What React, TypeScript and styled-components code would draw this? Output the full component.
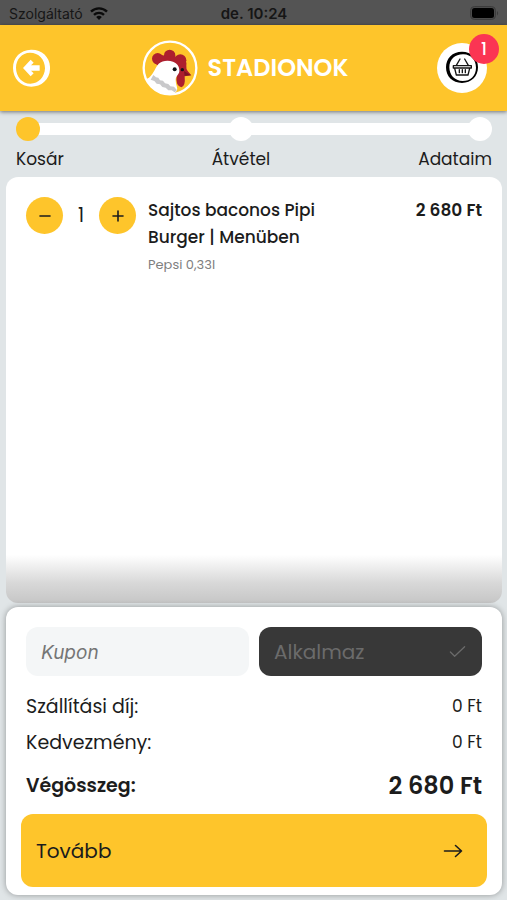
import React, { useState } from "react";
import styled, { createGlobalStyle, css } from "styled-components";

const color = {
  yellow: "#fec52b",
  page: "#e0e5e7",
  ink: "#1c1c1c",
  dark: "#383838",
  red: "#fb3553",
};

const GlobalStyle = createGlobalStyle`
  *, *::before, *::after { box-sizing: border-box; }
  body {
    margin: 0;
    background: ${color.page};
    color: ${color.ink};
    font-family: Poppins, Inter, sans-serif;
  }
  button, input { font-family: inherit; color: inherit; }
`;

const Screen = styled.div`
  display: flex;
  flex-direction: column;
  min-height: 100vh;
`;

const StatusBar = styled.div`
  display: grid;
  grid-template-columns: 1fr auto 1fr;
  align-items: center;
  height: 25px;
  padding: 2px 8px 0 9px;
  background: #545454;
  color: #161616;
  font-family: Inter, sans-serif;
  font-size: 14px;
  line-height: 20px;
`;

const Carrier = styled.div`
  display: flex;
  align-items: center;
  gap: 7px;
`;

const Clock = styled.time`
  font-weight: 600;
  font-size: 15px;
`;

const BatterySlot = styled.div`
  display: flex;
  justify-content: flex-end;
`;

const Header = styled.header`
  position: relative;
  display: grid;
  grid-template-columns: 1fr auto 1fr;
  align-items: center;
  height: 86px;
  padding: 0 20px 0 12px;
  background: ${color.yellow};
  box-shadow: 0 1px 4px rgba(0, 0, 0, 0.5);
`;

const IconButton = styled.button`
  display: grid;
  place-items: center;
  width: 38px;
  height: 38px;
  padding: 0;
  border: 0;
  border-radius: 50%;
  background: none;
  cursor: pointer;
`;

const Brand = styled.div`
  display: flex;
  align-items: center;
  gap: 10px;
  padding-right: 9px;
`;

const BrandName = styled.h1`
  margin: 0;
  color: #fff;
  font-size: 24px;
  font-weight: 600;
  line-height: 32px;
`;

const BasketButton = styled(IconButton)`
  position: relative;
  justify-self: end;
  width: 50px;
  height: 50px;
  background: #fff;
`;

const Badge = styled.span`
  position: absolute;
  top: -9px;
  right: -12px;
  width: 30px;
  height: 30px;
  border-radius: 50%;
  background: ${color.red};
  color: #fff;
  font-size: 17px;
  font-weight: 500;
  line-height: 30px;
  text-align: center;
`;

const Steps = styled.ol`
  position: relative;
  display: flex;
  justify-content: space-between;
  margin: 0;
  padding: 6px 15px 5px 16px;
  list-style: none;

  &::before {
    content: "";
    position: absolute;
    top: 12px;
    left: 28px;
    right: 28px;
    height: 12px;
    background: #fff;
  }
`;

const Step = styled.li<{ $align: "start" | "center" | "end" }>`
  position: relative;
  display: flex;
  flex-direction: column;
  align-items: ${(p) => (p.$align === "center" ? "center" : `flex-${p.$align}`)};
  gap: 5px;
  font-size: 17px;
  line-height: 26px;
`;

const StepDot = styled.span<{ $active: boolean }>`
  width: 24px;
  height: 24px;
  border-radius: 50%;
  background: ${(p) => (p.$active ? color.yellow : "#fff")};
`;

const panel = css`
  margin: 0 5px 0 6px;
  border-radius: 12px;
  background-color: #fff;
`;

const CartPanel = styled.main`
  ${panel}
  flex: 1;
  padding: 20px;
  background-image: linear-gradient(to top, #c6c6c6, #d8d8d8 20px, #fff 48px);
`;

const CartItem = styled.article`
  display: flex;
  align-items: flex-start;
  gap: 12px;
`;

const Quantity = styled.div`
  display: flex;
  align-items: center;
  flex: none;
`;

const RoundButton = styled.button`
  display: grid;
  place-items: center;
  width: 37px;
  height: 37px;
  padding: 0;
  border: 0;
  border-radius: 50%;
  background: ${color.yellow};
  cursor: pointer;
`;

const Count = styled.output`
  width: 36px;
  font-size: 19px;
  line-height: 37px;
  text-align: center;
`;

const ItemText = styled.div`
  flex: 1;
  max-width: 210px;
`;

const ItemName = styled.h2`
  margin: 0;
  font-size: 17px;
  font-weight: 500;
  line-height: 27px;
`;

const ItemNote = styled.p`
  margin: 0;
  color: #808080;
  font-size: 13px;
  line-height: 27px;
`;

const ItemPrice = styled.strong`
  margin-left: auto;
  font-size: 17px;
  font-weight: 600;
  line-height: 27px;
  white-space: nowrap;
`;

const SummaryPanel = styled.section`
  ${panel}
  margin-top: 4px;
  margin-bottom: 5px;
  padding: 20px 15px 8px;
  box-shadow: 0 0 6px rgba(0, 0, 0, 0.35);
`;

const CouponForm = styled.form`
  display: grid;
  grid-template-columns: 1fr 1fr;
  gap: 10px;
  padding: 0 5px;
  margin-bottom: 12px;
`;

const CouponInput = styled.input`
  min-width: 0;
  height: 49px;
  padding: 2px 15px 0;
  border: 0;
  border-radius: 12px;
  background: #f4f6f7;
  font-family: Inter, sans-serif;
  font-size: 19px;
  font-style: italic;

  &::placeholder {
    color: #757575;
    opacity: 1;
  }
`;

const WideButton = styled.button<{ $tone: "dark" | "yellow" }>`
  display: flex;
  align-items: center;
  justify-content: space-between;
  width: 100%;
  border: 0;
  border-radius: 12px;
  font-size: 20px;
  cursor: pointer;
  ${(p) =>
    p.$tone === "dark"
      ? css`
          height: 49px;
          padding: 0 15px;
          background: ${color.dark};
          color: #6b6b6b;
        `
      : css`
          height: 73px;
          padding: 0 24px 0 15px;
          background: ${color.yellow};
          color: ${color.ink};
        `}
`;

const Totals = styled.dl`
  margin: 0 0 4px;
  padding: 0 5px;
`;

const TotalRow = styled.div<{ $grand?: boolean }>`
  display: flex;
  align-items: center;
  justify-content: space-between;
  height: ${(p) => (p.$grand ? "50px" : "36px")};
  font-size: 19px;
  font-weight: ${(p) => (p.$grand ? 600 : 400)};

  dd {
    margin: 0;
    font-size: ${(p) => (p.$grand ? "24px" : "17px")};
  }
`;

const WifiIcon = () => (
  <svg width="18" height="13" viewBox="0 0 18 13" aria-hidden="true">
    <g fill="none" stroke="#0b0b0b" strokeWidth="2.4">
      <path d="M1 4.7a11.4 11.4 0 0 1 16 0" />
      <path d="M4 7.9a7.2 7.2 0 0 1 10 0" />
    </g>
    <path d="M9 13 6.2 10.1a4 4 0 0 1 5.6 0z" fill="#0b0b0b" />
  </svg>
);

const BatteryIcon = () => (
  <svg width="29" height="15" viewBox="0 0 29 15" aria-hidden="true">
    <rect x="0.5" y="0.5" width="25" height="13" rx="4" fill="#4b4b4b" stroke="#3c3c3c" />
    <rect x="2" y="2" width="22" height="10" rx="2.5" fill="#000" />
    <path d="M27 5v4.500c1.500-.7 1.500-3.800 0-4.500z" fill="#3c3c3c" />
  </svg>
);

const BackIcon = () => (
  <svg width="38" height="38" viewBox="0 0 114 114" aria-hidden="true">
    <path
      fill="#fff"
      fillRule="evenodd"
      d="M57 2C90 1 115 25 114 57C115 90 89 113 58 113C26 113 3 88 3 57C3 25 25 3 57 2ZM54 11C30 11 12 31 12 56C12 83 31 104 55 104C80 104 98 84 99 58C99 31 80 11 54 11Z"
    />
    <path fill="#fff" d="M33 57 56 32l9 9-8 8h26v16H57l8 8-9 9z" />
  </svg>
);

const BasketIcon = () => (
  <svg width="34" height="34" viewBox="0 0 102 102" aria-hidden="true">
    <path
      fillRule="evenodd"
      d="M51 2C80 2 99 21 99 49C99 76 79 96 51 96C22 96 3 76 3 49C3 22 22 2 51 2ZM56 10C31 9 13 25 13 49C13 72 29 90 53 90C76 90 93 74 93 50C93 27 78 11 56 10Z"
    />
    <g fill="none" stroke="#151515" strokeWidth="4" strokeLinecap="round" strokeLinejoin="round">
      <path d="M25 44h54v7H25zM29 52l5 20h35l5-20M34 43l11-19M70 43 59 24" />
      <path d="M43 56v9M52 56v9M61 56v9" />
    </g>
  </svg>
);

const RoosterLogo = () => (
  <svg width="56" height="56" viewBox="34 31 168 168" role="img" aria-label="Kakas">
    <defs>
      <clipPath id="rooster-disc">
        <circle cx="118" cy="115" r="79" />
      </clipPath>
    </defs>
    <circle cx="118" cy="115" r="80" fill={color.yellow} />
    <g clipPath="url(#rooster-disc)">
      <g fill="#ad1f2e">
        <circle cx="81" cy="87" r="17" />
        <circle cx="117" cy="77" r="17" />
        <circle cx="149" cy="92" r="18" />
        <path d="M70 99L90 75L117 82L150 80Q170 90 167 108Q166 118 171 124L182 137L162 140Q165 170 152 173Q134 168 138 140L126 105L85 110Z" />
      </g>
      <path
        fill="#fff"
        d="M55 144C70 131 74 112 84 102C94 93 112 90 127 96C141 102 147 112 146 124C146 134 135 139 135 151C135 166 143 175 138 184L118 205H50L36 154Z"
      />
      <path
        fill="#c9c9cb"
        d="M68 136L76 143L83 144L88 152L97 153L103 161L113 163L119 170L130 171L139 182L132 188L123 182L113 182L105 174L95 172L88 164L78 162L71 154L60 150Z"
      />
      <path fill="#7d1722" d="M160 124L181 137L162 138Z" />
    </g>
    <circle cx="132" cy="119" r="6" fill="#101418" />
    <circle cx="155" cy="120" r="5" fill="#101418" />
    <circle cx="118" cy="115" r="79" fill="none" stroke="#fff" strokeWidth="7" />
  </svg>
);

const StrokeIcon = ({ size, d, width = 1.3 }: { size: number; d: string; width?: number }) => (
  <svg
    width={size}
    height={size}
    viewBox="0 0 20 20"
    fill="none"
    stroke="currentColor"
    strokeWidth={width}
    strokeLinecap="round"
    strokeLinejoin="round"
    aria-hidden="true"
  >
    <path d={d} />
  </svg>
);

const steps = [
  { label: "Kosár", align: "start" },
  { label: "Átvétel", align: "center" },
  { label: "Adataim", align: "end" },
] as const;

const UNIT_PRICE = 2680;

const formatFt = (value: number) =>
  `${String(value).replace(/\B(?=(\d{3})+$)/g, "\u00a0")} Ft`;

export default function App() {
  const [count, setCount] = useState(1);
  const [coupon, setCoupon] = useState("");
  const total = formatFt(UNIT_PRICE * count);

  return (
    <>
      <GlobalStyle />
      <Screen>
        <StatusBar>
          <Carrier>
            Szolgáltató
            <WifiIcon />
          </Carrier>
          <Clock>de. 10:24</Clock>
          <BatterySlot>
            <BatteryIcon />
          </BatterySlot>
        </StatusBar>

        <Header>
          <IconButton type="button" aria-label="Vissza">
            <BackIcon />
          </IconButton>
          <Brand>
            <RoosterLogo />
            <BrandName>STADIONOK</BrandName>
          </Brand>
          <BasketButton type="button" aria-label="Kosár megnyitása">
            <BasketIcon />
            <Badge>{count}</Badge>
          </BasketButton>
        </Header>

        <Steps>
          {steps.map((step, index) => (
            <Step key={step.label} $align={step.align} aria-current={index === 0 ? "step" : undefined}>
              <StepDot $active={index === 0} />
              {step.label}
            </Step>
          ))}
        </Steps>

        <CartPanel>
          <CartItem>
            <Quantity>
              <RoundButton
                type="button"
                aria-label="Kevesebb"
                onClick={() => setCount(Math.max(1, count - 1))}
              >
                <StrokeIcon size={20} width={1.6} d="M5 10h10" />
              </RoundButton>
              <Count>{count}</Count>
              <RoundButton type="button" aria-label="Több" onClick={() => setCount(count + 1)}>
                <StrokeIcon size={20} width={1.6} d="M5 10h10M10 5v10" />
              </RoundButton>
            </Quantity>
            <ItemText>
              <ItemName>Sajtos baconos Pipi Burger | Menüben</ItemName>
              <ItemNote>Pepsi 0,33l</ItemNote>
            </ItemText>
            <ItemPrice>{total}</ItemPrice>
          </CartItem>
        </CartPanel>

        <SummaryPanel>
          <CouponForm onSubmit={(event) => event.preventDefault()}>
            <CouponInput
              type="text"
              aria-label="Kupon"
              placeholder="Kupon"
              value={coupon}
              onChange={(event) => setCoupon(event.target.value)}
            />
            <WideButton type="submit" $tone="dark">
              Alkalmaz
              <StrokeIcon size={19} d="M2.500 10.500 7 15 17.500 5" />
            </WideButton>
          </CouponForm>
          <Totals>
            <TotalRow>
              <dt>Szállítási díj:</dt>
              <dd>0 Ft</dd>
            </TotalRow>
            <TotalRow>
              <dt>Kedvezmény:</dt>
              <dd>0 Ft</dd>
            </TotalRow>
            <TotalRow $grand>
              <dt>Végösszeg:</dt>
              <dd>{total}</dd>
            </TotalRow>
          </Totals>
          <WideButton type="button" $tone="yellow">
            Tovább
            <StrokeIcon size={20} width={1.6} d="M1.500 10h17M12.500 4.500 18.500 10 12.500 15.500" />
          </WideButton>
        </SummaryPanel>
      </Screen>
    </>
  );
}
